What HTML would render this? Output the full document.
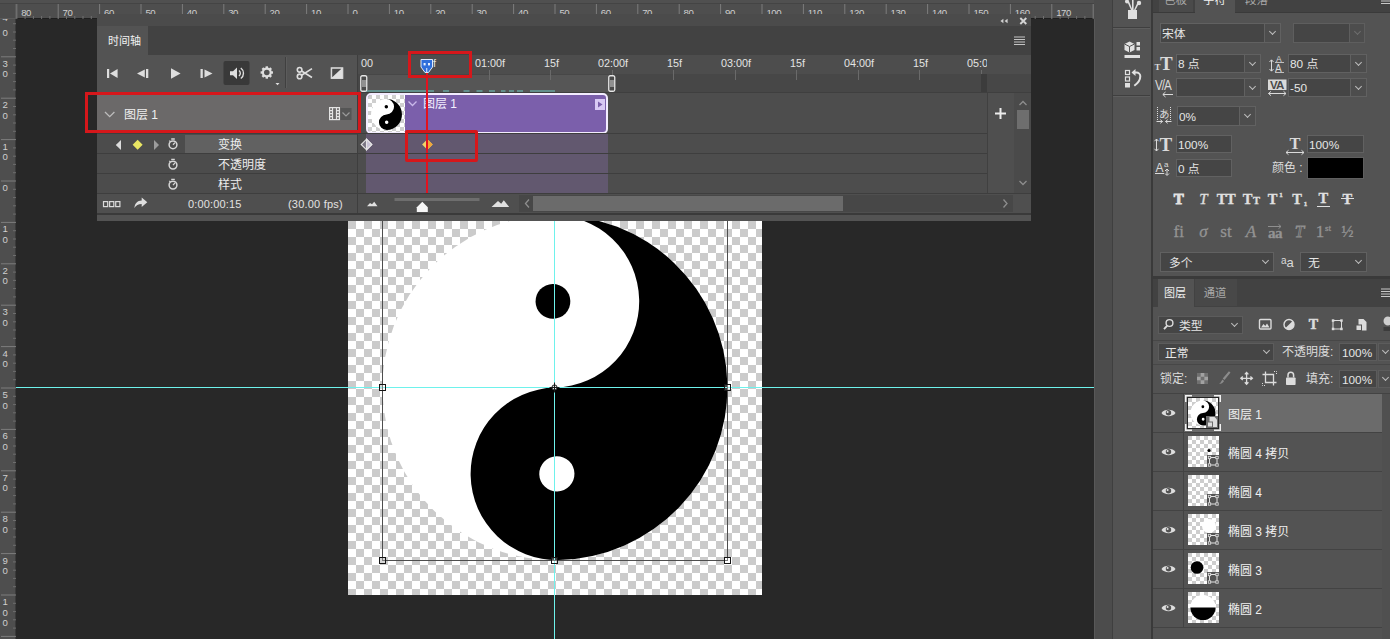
<!DOCTYPE html>
<html lang="zh-CN">
<head>
<meta charset="utf-8">
<title>Photoshop 时间轴</title>
<style>
*{box-sizing:border-box;margin:0;padding:0}
html,body{width:1390px;height:639px;overflow:hidden;background:#282828}
body{position:relative;font-family:"Liberation Sans","Noto Sans CJK SC",sans-serif;font-size:12px;color:#dcdcdc;line-height:1}
.abs{position:absolute}
svg{position:absolute;overflow:visible}
#paste{left:0;top:0;width:1094px;height:639px;background:#282828}
#canvas{left:348px;top:181px;width:414px;height:414px;background:repeating-conic-gradient(#cbcbcb 0% 25%,#fff 0% 50%) 0 0/16px 16px;}
#rulerH{left:0;top:0;width:1095px;height:19px;background:#4e4e4e;border-bottom:1px solid #1e1e1e}
#rulerV{left:0;top:19px;width:16px;height:620px;background:#4e4e4e;border-right:1px solid #3a3a3a}
.rl{position:absolute;font-size:10px;color:#c8c8c8;letter-spacing:0}
.guideH{left:16px;top:387px;width:1078px;height:1px;background:#6ef2ec}
.guideV{left:554px;top:221px;width:1px;height:418px;background:#6ef2ec}
/* timeline */
#tl{left:97px;top:14px;width:934px;height:207px;background:#535353}
/* right */
#gutter{left:1094px;top:0;width:19px;height:639px;background:#4c4c4c}
#strip{left:1112px;top:0;width:39px;height:639px;background:#535353;border-left:1px solid #3f3f3f}
#rsep{left:1151px;top:0;width:2px;height:639px;background:#3a3a3a}
#right{left:1153px;top:0;width:237px;height:639px;background:#535353}
.fld{position:absolute;background:#454545;border:1px solid #616161;height:19px;color:#e6e6e6;font-size:11.8px;line-height:17px;padding-left:1px;padding-top:0.600px;white-space:nowrap}
.fld .ar{position:absolute;right:0;top:0;bottom:0;width:16px;border-left:1px solid #686868;background:#4d4d4d}
.chev{position:absolute;left:50%;top:50%;width:5px;height:5px;margin:-4px 0 0 -2.500px;border-right:1.300px solid #bdbdbd;border-bottom:1.300px solid #bdbdbd;transform:rotate(45deg)}
.tabbar{position:absolute;background:#424242}
.tab{position:absolute;color:#a9a9a9;font-size:11.5px;text-align:center}
.tab.on{background:#535353;color:#f0f0f0}
</style>
</head>
<body>
<div id="paste" class="abs"></div>
<div id="canvas" class="abs"></div>
<svg id="yy" style="left:0;top:0" width="1094" height="639" viewBox="0 0 1094 639">
<g transform="translate(554.9 387.6) rotate(-1.3)">
<circle r="172.5" fill="#fff"/>
<path d="M0-172.5A172.5 172.5 0 0 1 0 172.5A86.25 86.25 0 0 1 0 0A86.25 86.25 0 0 0 0-172.5Z" fill="#000"/>
<circle cy="-86.25" r="17.4" fill="#000"/>
<circle cy="86.25" r="17.6" fill="#fff"/>
</g>
</svg>
<div class="abs guideH"></div>
<div class="abs guideV"></div>
<svg id="tbox" style="left:0;top:0" width="1094" height="639" viewBox="0 0 1094 639" shape-rendering="crispEdges">
<g fill="none" stroke="#4e4e4e" stroke-width="1">
<path d="M382.5 215V560.5H727.5V215"/>
</g>
<g fill="rgba(255,255,255,0.25)" stroke="#141414" stroke-width="1" style="outline:none">
<rect x="379.5" y="384.5" width="6" height="6"/>
<rect x="724.5" y="384.5" width="6" height="6"/>
<rect x="379.5" y="557.5" width="6" height="6"/>
<rect x="724.5" y="557.5" width="6" height="6"/>
<rect x="551.5" y="557.5" width="6" height="6"/>
</g>
<g shape-rendering="auto"><circle cx="554.5" cy="387.5" r="2.6" fill="#e8e8e8" stroke="#1a1a1a" stroke-width="1"/>
<path d="M554.5 382.5v10M549.5 387.5h10" stroke="#1a1a1a" stroke-width="1"/></g>
</svg>
<div id="rulerH" class="abs"></div>
<div id="rulerV" class="abs"></div>
<svg id="rH" style="left:0;top:0" width="1094" height="20" viewBox="0 0 1094 20">
<path d="M16.8 4V19M58.2 4V19M99.6 4V19M141.0 4V19M182.4 4V19M223.8 4V19M265.2 4V19M306.6 4V19M348.0 4V19M389.4 4V19M430.8 4V19M472.2 4V19M513.6 4V19M555.0 4V19M596.4 4V19M637.8 4V19M679.2 4V19M720.6 4V19M762.0 4V19M803.4 4V19M844.8 4V19M886.2 4V19M927.6 4V19M969.0 4V19M1010.4 4V19M1051.8 4V19M1093.2 4V19" stroke="#7d7d7d" stroke-width="1" fill="none"/>
<path d="M25.1 16V19M33.4 16V19M41.6 16V19M49.9 16V19M66.5 16V19M74.8 16V19M83.0 16V19M91.3 16V19M107.9 16V19M116.2 16V19M124.4 16V19M132.7 16V19M149.3 16V19M157.6 16V19M165.8 16V19M174.1 16V19M190.7 16V19M199.0 16V19M207.2 16V19M215.5 16V19M232.1 16V19M240.4 16V19M248.6 16V19M256.9 16V19M273.5 16V19M281.8 16V19M290.0 16V19M298.3 16V19M314.9 16V19M323.2 16V19M331.4 16V19M339.7 16V19M356.3 16V19M364.6 16V19M372.8 16V19M381.1 16V19M397.7 16V19M406.0 16V19M414.2 16V19M422.5 16V19M439.1 16V19M447.4 16V19M455.6 16V19M463.9 16V19M480.5 16V19M488.8 16V19M497.0 16V19M505.3 16V19M521.9 16V19M530.2 16V19M538.4 16V19M546.7 16V19M563.3 16V19M571.6 16V19M579.8 16V19M588.1 16V19M604.7 16V19M613.0 16V19M621.2 16V19M629.5 16V19M646.1 16V19M654.4 16V19M662.6 16V19M670.9 16V19M687.5 16V19M695.8 16V19M704.0 16V19M712.3 16V19M728.9 16V19M737.2 16V19M745.4 16V19M753.7 16V19M770.3 16V19M778.6 16V19M786.8 16V19M795.1 16V19M811.7 16V19M820.0 16V19M828.2 16V19M836.5 16V19M853.1 16V19M861.4 16V19M869.6 16V19M877.9 16V19M894.5 16V19M902.8 16V19M911.0 16V19M919.3 16V19M935.9 16V19M944.2 16V19M952.4 16V19M960.7 16V19M977.3 16V19M985.6 16V19M993.8 16V19M1002.1 16V19M1018.7 16V19M1027.0 16V19M1035.2 16V19M1043.5 16V19M1060.1 16V19M1068.4 16V19M1076.6 16V19M1084.9 16V19" stroke="#6e6e6e" stroke-width="1" fill="none"/>
<g font-family="Liberation Sans, sans-serif" font-size="9.6" fill="#cfcfcf" letter-spacing="-0.4">
<text x="21.2" y="15.8">80</text>
<text x="62.6" y="15.8">70</text>
<text x="104.0" y="15.8">60</text>
<text x="145.4" y="15.8">50</text>
<text x="186.8" y="15.8">40</text>
<text x="228.2" y="15.8">30</text>
<text x="269.6" y="15.8">20</text>
<text x="311.0" y="15.8">10</text>
<text x="352.4" y="15.8">0</text>
<text x="393.8" y="15.8">10</text>
<text x="435.2" y="15.8">20</text>
<text x="476.6" y="15.8">30</text>
<text x="518.0" y="15.8">40</text>
<text x="559.4" y="15.8">50</text>
<text x="600.8" y="15.8">60</text>
<text x="642.2" y="15.8">70</text>
<text x="683.6" y="15.8">80</text>
<text x="725.0" y="15.8">90</text>
<text x="766.4" y="15.8">100</text>
<text x="807.8" y="15.8">110</text>
<text x="849.2" y="15.8">120</text>
<text x="890.6" y="15.8">130</text>
<text x="932.0" y="15.8">140</text>
<text x="973.4" y="15.8">150</text>
<text x="1014.8" y="15.8">160</text>
<text x="1056.2" y="15.8">170</text>
<text x="1097.6" y="15.8">180</text>
</g></svg>
<svg id="rV" style="left:0;top:19px" width="16" height="620" viewBox="0 19 16 620">
<path d="M1 56.8H16M1 98.2H16M1 139.6H16M1 181.0H16M1 222.4H16M1 263.8H16M1 305.2H16M1 346.6H16M1 388.0H16M1 429.4H16M1 470.8H16M1 512.2H16M1 553.6H16M1 595.0H16M1 636.4H16" stroke="#7d7d7d" stroke-width="1" fill="none"/>
<path d="M13 23.7H16M13 32.0H16M13 40.2H16M13 48.5H16M13 65.1H16M13 73.4H16M13 81.6H16M13 89.9H16M13 106.5H16M13 114.8H16M13 123.0H16M13 131.3H16M13 147.9H16M13 156.2H16M13 164.4H16M13 172.7H16M13 189.3H16M13 197.6H16M13 205.8H16M13 214.1H16M13 230.7H16M13 239.0H16M13 247.2H16M13 255.5H16M13 272.1H16M13 280.4H16M13 288.6H16M13 296.9H16M13 313.5H16M13 321.8H16M13 330.0H16M13 338.3H16M13 354.9H16M13 363.2H16M13 371.4H16M13 379.7H16M13 396.3H16M13 404.6H16M13 412.8H16M13 421.1H16M13 437.7H16M13 446.0H16M13 454.2H16M13 462.5H16M13 479.1H16M13 487.4H16M13 495.6H16M13 503.9H16M13 520.5H16M13 528.8H16M13 537.0H16M13 545.3H16M13 561.9H16M13 570.2H16M13 578.4H16M13 586.7H16M13 603.3H16M13 611.6H16M13 619.8H16M13 628.1H16" stroke="#6e6e6e" stroke-width="1" fill="none"/>
<g font-family="Liberation Sans, sans-serif" font-size="9.6" fill="#cfcfcf">
<text x="2.4" y="21.4">4</text>
<text x="2.4" y="35.9">0</text>
<text x="2.4" y="66.8">3</text>
<text x="2.4" y="77.3">0</text>
<text x="2.4" y="108.2">2</text>
<text x="2.4" y="118.7">0</text>
<text x="2.4" y="149.6">1</text>
<text x="2.4" y="160.1">0</text>
<text x="2.4" y="191.0">0</text>
<text x="2.4" y="232.4">1</text>
<text x="2.4" y="242.9">0</text>
<text x="2.4" y="273.8">2</text>
<text x="2.4" y="284.3">0</text>
<text x="2.4" y="315.2">3</text>
<text x="2.4" y="325.7">0</text>
<text x="2.4" y="356.6">4</text>
<text x="2.4" y="367.1">0</text>
<text x="2.4" y="398.0">5</text>
<text x="2.4" y="408.5">0</text>
<text x="2.4" y="439.4">6</text>
<text x="2.4" y="449.9">0</text>
<text x="2.4" y="480.8">7</text>
<text x="2.4" y="491.3">0</text>
<text x="2.4" y="522.2">8</text>
<text x="2.4" y="532.7">0</text>
<text x="2.4" y="563.6">9</text>
<text x="2.4" y="574.1">0</text>
<text x="2.4" y="605.0">1</text>
<text x="2.4" y="615.5">0</text>
<text x="2.4" y="626.0">0</text>
<text x="2.4" y="646.4">1</text>
<text x="2.4" y="656.9">1</text>
<text x="2.4" y="667.4">0</text>
</g></svg>
<div class="abs" style="left:0;top:0;width:16px;height:19px;background:#4c4c4c;border-right:1px solid #5a5a5a;border-bottom:1px solid #5a5a5a"></div>
<div class="abs" style="left:0;top:0;width:1095px;height:3px;background:#505050"></div><div class="abs" style="left:0;top:3px;width:1095px;height:1px;background:#444"></div>
<div id="tl" class="abs" style="left:0;top:0;width:0;height:0">
<div class="abs" style="left:97px;top:14px;width:934px;height:207px;background:#535353"></div>
<div class="abs" style="left:97px;top:14px;width:934px;height:12px;background:#4b4b4b"></div>
<div class="abs" style="left:97px;top:26px;width:934px;height:29px;background:#424242"></div>
<div class="abs" style="left:97px;top:26px;width:51px;height:29px;background:#535353;color:#f2f2f2;font-size:11px;line-height:30px;padding-left:11px;white-space:nowrap">时间轴</div>
<svg style="left:998px;top:16px" width="36" height="10" viewBox="0 0 36 10"><path d="M5.400 2.800L2.400 5l3 2.200zM9.600 2.800L6.600 5l3 2.200z" fill="#d0d0d0"/><path d="M22.300 2l6 6M28.300 2l-6 6" stroke="#d4d4d4" stroke-width="1.900"/></svg>
<svg style="left:1014px;top:36px" width="12" height="10" viewBox="0 0 12 10"><path d="M0 1h11M0 3.500h11M0 6h11M0 8.500h11" stroke="#c4c4c4" stroke-width="1"/></svg>
<!-- time ruler rows -->
<div class="abs" style="left:358px;top:55px;width:673px;height:19px;background:#4d4d4d"></div>
<div class="abs" style="left:358px;top:74px;width:673px;height:19px;background:#474747"></div>
<div class="abs" style="left:364px;top:75px;width:247px;height:17px;background:#565656"></div>
<!-- track areas -->
<div class="abs" style="left:358px;top:93px;width:629px;height:101px;background:#4d4d4d"></div>
<div class="abs" style="left:358px;top:92px;width:673px;height:1px;background:#3f3f3f"></div>
<div class="abs" style="left:987px;top:93px;width:44px;height:101px;background:#4f4f4f;border-left:1px solid #404040"></div>
<div class="abs" style="left:358px;top:55px;width:629px;height:38px;overflow:hidden">
<div class="abs" style="left:-21.0px;top:2px;width:60px;text-align:center;font-size:10.8px;line-height:12px;color:#e4e4e4;white-space:nowrap">00</div>
<div class="abs" style="left:40.5px;top:2px;width:60px;text-align:center;font-size:10.8px;line-height:12px;color:#e4e4e4;white-space:nowrap">15f</div>
<div class="abs" style="left:69.0px;top:15px;width:1px;height:10px;background:#6a6a6a"></div>
<div class="abs" style="left:102.0px;top:2px;width:60px;text-align:center;font-size:10.8px;line-height:12px;color:#e4e4e4;white-space:nowrap">01:00f</div>
<div class="abs" style="left:130.5px;top:15px;width:1px;height:10px;background:#6a6a6a"></div>
<div class="abs" style="left:163.5px;top:2px;width:60px;text-align:center;font-size:10.8px;line-height:12px;color:#e4e4e4;white-space:nowrap">15f</div>
<div class="abs" style="left:192.0px;top:15px;width:1px;height:10px;background:#6a6a6a"></div>
<div class="abs" style="left:225.0px;top:2px;width:60px;text-align:center;font-size:10.8px;line-height:12px;color:#e4e4e4;white-space:nowrap">02:00f</div>
<div class="abs" style="left:253.5px;top:15px;width:1px;height:10px;background:#6a6a6a"></div>
<div class="abs" style="left:286.5px;top:2px;width:60px;text-align:center;font-size:10.8px;line-height:12px;color:#e4e4e4;white-space:nowrap">15f</div>
<div class="abs" style="left:315.0px;top:15px;width:1px;height:10px;background:#6a6a6a"></div>
<div class="abs" style="left:348.0px;top:2px;width:60px;text-align:center;font-size:10.8px;line-height:12px;color:#e4e4e4;white-space:nowrap">03:00f</div>
<div class="abs" style="left:376.5px;top:15px;width:1px;height:10px;background:#6a6a6a"></div>
<div class="abs" style="left:409.5px;top:2px;width:60px;text-align:center;font-size:10.8px;line-height:12px;color:#e4e4e4;white-space:nowrap">15f</div>
<div class="abs" style="left:438.0px;top:15px;width:1px;height:10px;background:#6a6a6a"></div>
<div class="abs" style="left:471.0px;top:2px;width:60px;text-align:center;font-size:10.8px;line-height:12px;color:#e4e4e4;white-space:nowrap">04:00f</div>
<div class="abs" style="left:499.5px;top:15px;width:1px;height:10px;background:#6a6a6a"></div>
<div class="abs" style="left:532.5px;top:2px;width:60px;text-align:center;font-size:10.8px;line-height:12px;color:#e4e4e4;white-space:nowrap">15f</div>
<div class="abs" style="left:561.0px;top:15px;width:1px;height:10px;background:#6a6a6a"></div>
<div class="abs" style="left:594.0px;top:2px;width:60px;text-align:center;font-size:10.8px;line-height:12px;color:#e4e4e4;white-space:nowrap">05:00f</div>
<div class="abs" style="left:622.5px;top:15px;width:1px;height:10px;background:#6a6a6a"></div>
</div>
<div class="abs" style="left:981px;top:74px;width:6px;height:18px;background:#3c3c3c"></div>
<svg style="left:366px;top:88.500px" width="200" height="4" viewBox="0 0 200 4"><path d="M0 2h68M77 2h6M97.500 2h6M110.500 2h6M123 2h6M135 2h4.500M143 2h5M151 2h6M164 2h25" stroke="#68a39f" stroke-width="1.600" fill="none"/></svg>
<svg style="left:360px;top:75px" width="8" height="17" viewBox="0 0 8 17"><rect x="0.750" y="0.750" width="6" height="15.500" rx="1.500" fill="#4a4a4a" stroke="#e6e6e6" stroke-width="1.300"/><path d="M3 5v7M5 5v7" stroke="#e6e6e6" stroke-width="0.900"/></svg>
<svg style="left:608px;top:75px" width="8" height="17" viewBox="0 0 8 17"><rect x="0.750" y="0.750" width="6" height="15.500" rx="1.500" fill="#4a4a4a" stroke="#e6e6e6" stroke-width="1.300"/><path d="M3 5v7M5 5v7" stroke="#e6e6e6" stroke-width="0.900"/></svg>
<div class="abs" style="left:366px;top:134px;width:242px;height:59px;background:#62586f"></div>
<div class="abs" style="left:366px;top:153px;width:242px;height:1px;background:#4a4258"></div>
<div class="abs" style="left:366px;top:173px;width:242px;height:1px;background:#4a4258"></div>
<div class="abs" style="left:366px;top:93px;width:242px;height:41px;background:#7b5fab;border:2px solid #f3ecff;border-radius:5px;overflow:hidden">
<div class="abs" style="left:0;top:0;width:37px;height:37px;background:repeating-conic-gradient(#fff 0% 25%,#cfcfcf 0% 50%) 0 0/8px 8px"></div>
<svg style="left:2px;top:3px" width="33" height="33" viewBox="-16 -16 32 32"><g transform="rotate(-1.300)"><circle r="15" fill="#fff"/><path d="M0-15A15 15 0 0 1 0 15A7.500 7.500 0 0 1 0 0A7.500 7.500 0 0 0 0-15Z" fill="#000"/><circle cy="-7.500" r="1.700" fill="#000"/><circle cy="7.500" r="1.700" fill="#fff"/></g></svg>
<svg style="left:38.500px;top:5px" width="12" height="8" viewBox="0 0 12 8"><path d="M1.500 1.500l4 4 4-4" fill="none" stroke="#c9b8ea" stroke-width="1.300"/></svg>
<div class="abs" style="left:55px;top:2px;font-size:12px;line-height:14px;color:#f4f0ff;white-space:nowrap">图层 1</div>
<svg style="left:227px;top:4px" width="10" height="11" viewBox="0 0 10 11"><rect width="10" height="11" fill="#d9c9f4"/><path d="M3 2.500v6l4.500-3z" fill="#7b5fab"/></svg>
</div>
<svg style="left:358px;top:134px" width="130" height="22" viewBox="358 134 130 22">
<path d="M366.500 139.200l5.300 5.300-5.300 5.300-5.300-5.300z" fill="#7a7683" stroke="#e6e6e6" stroke-width="1.100"/>
<path d="M366.500 139.200l5.300 5.300-5.300 5.300z" fill="#c9c4d6" stroke="#e6e6e6" stroke-width="1.100"/>
<path d="M427.400 139.200l5.300 5.300-5.300 5.300-5.300-5.300z" fill="#f3d468"/>
<path d="M427.400 139.200l5.300 5.300-5.300 5.300z" fill="#f0a63a"/>
</svg>
<div class="abs" style="left:426px;top:73px;width:2px;height:120px;background:#e3121f"></div>
<svg style="left:419px;top:58px" width="16" height="17" viewBox="0 0 16 17"><path d="M2 1.500h11.500v7.500l-4 5.500h-3.500l-4-5.500z" fill="#2f6fdb" stroke="#dfe9fb" stroke-width="1"/><rect x="4.600" y="5" width="2" height="2.400" fill="#e8f0ff"/><rect x="9" y="5" width="2" height="2.400" fill="#e8f0ff"/><path d="M7.750 10v4" stroke="#e8f0ff" stroke-width="1"/></svg>
<svg style="left:994px;top:107px" width="13" height="13" viewBox="0 0 13 13"><path d="M6.500 1v11M1 6.500h11" stroke="#ececec" stroke-width="2"/></svg>
<div class="abs" style="left:1014px;top:93px;width:17px;height:101px;background:#4a4a4a"></div>
<div class="abs" style="left:1017px;top:110px;width:12px;height:19px;background:#6e6e6e"></div>
<svg style="left:1018px;top:98px" width="10" height="92" viewBox="0 0 10 92"><path d="M1.500 7L5 3.500 8.500 7M1.500 83L5 86.500 8.500 83" fill="none" stroke="#8e8e8e" stroke-width="1.300"/></svg>
<!-- bottom bar -->
<div class="abs" style="left:97px;top:194px;width:934px;height:19px;background:#4f4f4f"></div>
<div class="abs" style="left:97px;top:213px;width:934px;height:2px;background:#3a3a3a"></div>
<!-- left column -->
<div class="abs" style="left:97px;top:93px;width:261px;height:41px;background:#6b6969"></div>
<div class="abs" style="left:97px;top:134px;width:261px;height:60px;background:#4c4c4c"></div>
<div class="abs" style="left:185px;top:135px;width:173px;height:18px;background:#616161"></div>
<div class="abs" style="left:97px;top:153px;width:890px;height:1px;background:#3e3e3e"></div>
<div class="abs" style="left:97px;top:173px;width:890px;height:1px;background:#3e3e3e"></div>
<div class="abs" style="left:97px;top:193px;width:934px;height:1px;background:#3e3e3e"></div>
<div class="abs" style="left:97px;top:133px;width:890px;height:1px;background:#3e3e3e"></div>
<div class="abs" style="left:357px;top:55px;width:1px;height:158px;background:#3e3e3e"></div>
<svg style="left:97px;top:55px" width="261" height="38" viewBox="97 55 261 38">
<g fill="#dedede">
<path d="M107 69h2.200v9H107zM117.600 69v9l-7.600-4.500z"/>
<path d="M144.800 69.500L137 73.500l7.800 4zM146 69h2.300v9H146z"/>
<path d="M171 68.300v10.400l9.600-5.200z"/>
<path d="M200.500 69h2.300v9h-2.300zM204.500 69.500v8l8-4z"/>
</g>
<rect x="223.500" y="61" width="26" height="24" rx="2" fill="#393939"/>
<path d="M230 71.200h3l4-3.700v11.500l-4-3.700h-3z" fill="#dedede"/>
<path d="M239 70.500a3.500 3.500 0 0 1 0 5.500M240.800 68a6.500 6.500 0 0 1 0 10.500" fill="none" stroke="#dedede" stroke-width="1.400"/>
<g transform="translate(266.800 72.500)" fill="#dedede">
<circle r="3.900" fill="none" stroke="#dedede" stroke-width="2.200"/>
<g id="gt"><rect x="-1.200" y="-6.200" width="2.400" height="2.600"/><rect x="-1.200" y="3.600" width="2.400" height="2.600"/><rect x="-6.200" y="-1.200" width="2.600" height="2.400"/><rect x="3.600" y="-1.200" width="2.600" height="2.400"/></g>
<g transform="rotate(45)"><rect x="-1.200" y="-6.200" width="2.400" height="2.600"/><rect x="-1.200" y="3.600" width="2.400" height="2.600"/><rect x="-6.200" y="-1.200" width="2.600" height="2.400"/><rect x="3.600" y="-1.200" width="2.600" height="2.400"/></g>
</g>
<path d="M275.500 83h4l-2 2.200z" fill="#dedede"/>
<path d="M285.500 57v31" stroke="#404040" stroke-width="1"/><path d="M286.500 57v31" stroke="#5c5c5c" stroke-width="1"/>
<g fill="none" stroke="#dedede" stroke-width="1.600">
<circle cx="299.600" cy="69.800" r="2.300"/><circle cx="299.600" cy="76.400" r="2.300"/>
<path d="M301.600 71L312 77.500M301.600 75.200L312 68.600"/>
</g>
<rect x="331.200" y="67.800" width="11.600" height="10.600" fill="#e0e0e0" stroke="#e0e0e0" stroke-width="1"/>
<path d="M332.200 68.800h9.200l-9.200 8.400z" fill="#4a4a4a"/>
</svg>
<svg style="left:97px;top:93px" width="261" height="120" viewBox="97 93 261 120">
<path d="M105 112l4.700 4.600 4.700-4.600" fill="none" stroke="#bdbdbd" stroke-width="1.300"/>
<g fill="none" stroke="#e4e4e4" stroke-width="1.200"><rect x="329.600" y="107.600" width="9.800" height="12"/><path d="M332.500 107.600v12M336.500 107.600v12M329.600 110.600h3M329.600 113.600h3M329.600 116.600h3M336.500 110.600h3M336.500 113.600h3M336.500 116.600h3"/></g>
<rect x="340.500" y="108" width="11" height="12" fill="#555"/>
<path d="M342.500 112.500l3.500 3.500 3.500-3.500" fill="none" stroke="#9a9a9a" stroke-width="1.200"/>
<path d="M121 140v10l-5.200-5z" fill="#dcdcdc"/>
<path d="M137.600 139.700l5 5-5 5-5-5z" fill="#e9e663"/>
<path d="M154 140v10l5-5z" fill="#9c9c9c"/>
<g transform="translate(168 138)"><g fill="none" stroke="#d6d6d6" stroke-width="1.5"><circle cx="5" cy="6.800" r="3.900"/><path d="M5 6.800L7 4.600M3.200 1h3.600M1.300 2.600l1.200 1.200" stroke-width="1.300"/></g></g>
<g transform="translate(168 158.300)"><g fill="none" stroke="#d6d6d6" stroke-width="1.5"><circle cx="5" cy="6.800" r="3.900"/><path d="M5 6.800L7 4.600M3.200 1h3.600M1.300 2.600l1.200 1.200" stroke-width="1.300"/></g></g>
<g transform="translate(168 178.300)"><g fill="none" stroke="#d6d6d6" stroke-width="1.5"><circle cx="5" cy="6.800" r="3.900"/><path d="M5 6.800L7 4.600M3.200 1h3.600M1.300 2.600l1.200 1.200" stroke-width="1.300"/></g></g>
<g fill="none" stroke="#dadada" stroke-width="1.200"><rect x="103.500" y="201.600" width="4.200" height="5"/><rect x="109.600" y="201.600" width="4.200" height="5"/><rect x="115.700" y="201.600" width="4.200" height="5"/></g>
<path d="M147.300 202.300l-5.600-4.800v2.900c-4.500.2-7 3-7.300 7.600 1.700-2.800 3.800-4 7.300-4v3.100z" fill="#dedede"/>
</svg>
<div class="abs" style="left:124px;top:108px;font-size:12px;line-height:14px;color:#f0f0f0;white-space:nowrap">图层 1</div>
<div class="abs" style="left:218px;top:138px;font-size:12px;line-height:14px;color:#ececec;white-space:nowrap">变换</div>
<div class="abs" style="left:218px;top:158px;font-size:12px;line-height:14px;color:#ececec;white-space:nowrap">不透明度</div>
<div class="abs" style="left:218px;top:178px;font-size:12px;line-height:14px;color:#ececec;white-space:nowrap">样式</div>
<div class="abs" style="left:188px;top:198px;font-size:11px;line-height:12px;color:#e2e2e2;white-space:nowrap;letter-spacing:0.150px">0:00:00:15</div>
<div class="abs" style="left:288px;top:198px;font-size:11px;line-height:12px;color:#e2e2e2;white-space:nowrap;letter-spacing:0.200px">(30.00 fps)</div>

<svg style="left:358px;top:194px" width="673" height="19" viewBox="358 194 673 19">
<path d="M367 206.300l3-3.200 2 1.200 2.200-2.500 3.300 4.500z" fill="#e0e0e0"/>
<rect x="394.500" y="198" width="85" height="3" fill="#6e6e6e"/>
<path d="M416.800 212v-4.800l5.500-5.400 5.500 5.400v4.800z" fill="#f6f6f6"/>
<path d="M491.500 207l6.500-6 3.200 2.800 2.600-3.600 5.400 6.800z" fill="#e0e0e0"/>
<rect x="519" y="195" width="494" height="17" fill="#474747"/>
<rect x="533" y="196" width="310" height="15" fill="#6b6b6b"/>
<path d="M529 199.500l-3.500 4 3.500 4M1003.500 199.500l3.500 4-3.500 4" fill="none" stroke="#8e8e8e" stroke-width="1.300"/>
</svg>
</div>
<!-- annotations -->
<div class="abs" style="left:85px;top:92px;width:276px;height:41px;border:3px solid #d6171b"></div>
<div class="abs" style="left:408px;top:51px;width:64px;height:27px;border:3px solid #d6171b"></div>
<div class="abs" style="left:405px;top:130px;width:73px;height:32px;border:3px solid #d6171b;border-radius:2px"></div>
<div id="gutter" class="abs"></div><div class="abs" style="left:1094px;top:19px;width:1px;height:620px;background:#585858"></div>
<div id="strip" class="abs">
<div class="abs" style="left:0;top:27px;width:37px;height:1px;background:#3f3f3f"></div>
<div class="abs" style="left:0;top:28px;width:37px;height:1px;background:#5e5e5e"></div>
<div class="abs" style="left:0;top:95px;width:37px;height:1px;background:#3f3f3f"></div>
<div class="abs" style="left:0;top:96px;width:37px;height:1px;background:#5e5e5e"></div>
<svg style="left:-1px;top:0" width="37" height="100" viewBox="1113 0 37 100">
<g fill="#e0e0e0"><rect x="1129" y="10" width="9" height="9"/><path d="M1132 10l-3.500-8 1.500-.8 3.500 8.800zM1133 10V0h1.600v10zM1135 10l3.500-7.500 1.500.8-3.500 6.700z"/><circle cx="1128" cy="1.500" r="2"/><circle cx="1140" cy="3" r="2.200"/></g>
<g fill="#e0e0e0"><path d="M1125.500 44l5-2.500 5 2.500v6l-5 2.500-5-2.500z"/><rect x="1137.500" y="42" width="3.500" height="3.500"/><rect x="1137.500" y="47" width="3.500" height="3.500"/><rect x="1125.500" y="55" width="15.500" height="3"/></g>
<path d="M1125.500 44l5 2.500 5-2.500M1130.500 46.500v6" fill="none" stroke="#535353" stroke-width="1"/>
<g fill="none" stroke="#e0e0e0" stroke-width="1.200"><rect x="1126.500" y="70.500" width="4" height="4"/><rect x="1126.500" y="77" width="4" height="4"/></g><rect x="1126" y="83" width="5" height="4.500" fill="#e0e0e0"/>
<path d="M1134 72.500h3.500a3.800 3.800 0 0 1 3.800 3.800c0 4-2.500 7-6 9.500" fill="none" stroke="#e0e0e0" stroke-width="2"/><path d="M1136.500 69l-4 3.500 4 3.500z" fill="#e0e0e0"/>
</svg>
</div>
<div id="rsep" class="abs"></div>
<div id="right" class="abs">
<div class="tabbar" style="left:0;top:0;width:237px;height:12px"></div>
<div class="abs" style="left:0;top:12px;width:237px;height:1px;background:#3a3a3a"></div>
<div class="tab" style="left:6px;top:0;width:34px;height:12px;background:#4a4a4a;overflow:hidden"><span style="position:absolute;left:5px;top:-7px;line-height:14px;white-space:nowrap">色板</span></div>
<div class="tab on" style="left:42px;top:0;width:40px;height:13px;overflow:hidden"><span style="position:absolute;left:8px;top:-7px;line-height:14px;white-space:nowrap">字符</span></div>
<div class="tab" style="left:84px;top:0;width:40px;height:12px;overflow:hidden"><span style="position:absolute;left:8px;top:-7px;line-height:14px;white-space:nowrap">段落</span></div>
<svg style="left:228px;top:0" width="9" height="5" viewBox="0 0 9 5"><path d="M0 1h9M0 3.500h9" stroke="#c8c8c8" stroke-width="1"/></svg>
<div class="fld" style="left:7px;top:23px;width:121px;height:20px;line-height:18px;border-color:#616161;">宋体<span class="ar" style="width:16px;border-left-color:#616161"><i class="chev"></i></span></div>
<div class="fld" style="left:140px;top:23px;width:72px;height:20px;line-height:18px;border-color:#5e5e5e;"><span class="ar" style="width:15px;border-left-color:#5e5e5e"><i class="chev" style="border-color:#6e6e6e"></i></span></div>
<div class="fld" style="left:23px;top:54px;width:85px;height:19px;line-height:17px;border-color:#616161;">8 点<span class="ar" style="width:16px;border-left-color:#616161"><i class="chev"></i></span></div>
<div class="fld" style="left:135px;top:54px;width:79px;height:19px;line-height:17px;border-color:#616161;">80 点<span class="ar" style="width:16px;border-left-color:#616161"><i class="chev"></i></span></div>
<div class="fld" style="left:23px;top:78px;width:85px;height:19px;line-height:17px;border-color:#616161;"><span class="ar" style="width:16px;border-left-color:#616161"><i class="chev"></i></span></div>
<div class="fld" style="left:135px;top:78px;width:79px;height:19px;line-height:17px;border-color:#616161;">-50<span class="ar" style="width:16px;border-left-color:#616161"><i class="chev"></i></span></div>
<div class="fld" style="left:24px;top:106px;width:79px;height:20px;line-height:18px;border-color:#616161;">0%<span class="ar" style="width:16px;border-left-color:#616161"><i class="chev"></i></span></div>
<div class="fld" style="left:23px;top:135px;width:56px;height:18px;line-height:16px;border-color:#616161;">100%</div>
<div class="fld" style="left:154px;top:135px;width:57px;height:18px;line-height:16px;border-color:#616161;">100%</div>
<div class="fld" style="left:23px;top:159px;width:56px;height:18px;line-height:16px;border-color:#616161;">0 点</div>
<div class="abs" style="left:119px;top:161px;font-size:12px;line-height:14px;color:#dcdcdc;white-space:nowrap">颜色 :</div>
<div class="abs" style="left:154px;top:157px;width:57px;height:22px;background:#000;border:1px solid #5f5f5f"></div>
<div class="fld" style="left:7px;top:252px;width:114px;height:20px;line-height:18px;border-color:#616161;padding-left:8px;">多个<span class="ar" style="width:16px;border-left-color:transparent;background:transparent"><i class="chev"></i></span></div>
<div class="fld" style="left:147px;top:252px;width:67px;height:20px;line-height:18px;border-color:#616161;padding-left:7px;">无<span class="ar" style="width:16px;border-left-color:transparent;background:transparent"><i class="chev"></i></span></div>
<svg style="left:0;top:0" width="237" height="280" viewBox="1153 0 237 280">
<g font-family="Liberation Serif, serif" fill="#dadada" font-weight="bold">
<text x="1154.500" y="69.500" font-size="9">T</text><text x="1160" y="70" font-size="19">T</text>
<text x="1276" y="62" font-size="8.500" font-family="Liberation Sans, sans-serif" font-weight="normal">A</text><text x="1275" y="72" font-size="10" font-family="Liberation Sans, sans-serif" font-weight="normal">A</text>
<text x="1155" y="90.500" font-size="15" font-family="Liberation Sans, sans-serif" font-weight="normal" letter-spacing="-1.300" transform="translate(1155 0) scale(0.780 1) translate(-1155 0)">V/A</text>

<text x="1159" y="117.500" font-size="10.500" font-family="Noto Sans CJK JP, sans-serif" font-weight="normal">あ</text>
<text x="1159.500" y="150.500" font-size="19">T</text>
<text x="1289.500" y="148.800" font-size="16.500">T</text>
<text x="1155.500" y="172" font-size="12" font-family="Liberation Sans, sans-serif" font-weight="normal">A</text><text x="1164" y="167" font-size="8" font-family="Liberation Sans, sans-serif" font-weight="normal">a</text>
<text x="1281" y="263.500" font-size="10" font-family="Liberation Sans, sans-serif" font-weight="normal">a</text><text x="1286.500" y="266.500" font-size="13" font-family="Liberation Sans, sans-serif" font-weight="normal">a</text>
</g>
<g fill="none" stroke="#dadada" stroke-width="1">
<path d="M1271.500 60v11M1269.500 62l2-2.200 2 2.200M1269.500 69l2 2.200 2-2.200"/>
<path d="M1275 62.500h9M1275 72.500h9" stroke-width="0.800"/>
<path d="M1163 94.500h10M1165.500 92l-2.700 2.500 2.700 2.500"/>
<path d="M1268.500 93.500h17.500M1271 91.300l-2.500 2.200 2.500 2.200M1283.500 91.300l2.500 2.200-2.500 2.200"/>
<path d="M1157.500 107v13M1170.500 107v13" stroke-dasharray="1 1"/>
<path d="M1156.500 121.500h6M1171.500 121.500h-6M1160.300 119.700l2.200 1.800-2.200 1.800M1167.700 119.700l-2.200 1.800 2.200 1.800"/>
<path d="M1156.500 139v12M1154.500 141.200l2-2.200 2 2.200M1154.500 148.800l2 2.200 2-2.200"/>
<path d="M1286 152.500h18M1288.500 150.300l-2.500 2.200 2.500 2.200M1301.500 150.300l2.500 2.200-2.500 2.200"/>
<path d="M1167 169v6M1165 171l2-2 2 2M1165 173.500l2 2 2-2M1155 173.500h9"/>
</g>
<rect x="1268" y="79.500" width="18.500" height="10.500" fill="#dadada"/>
<text x="1270" y="89" font-size="11.500" font-family="Liberation Sans, sans-serif" font-weight="bold" fill="#4a4a4a" letter-spacing="-0.900">VA</text>
<g font-family="Liberation Serif, serif" fill="#e0e0e0" font-weight="bold" font-size="15" text-anchor="middle" stroke="#e0e0e0" stroke-width="0.300">
<text x="1178.800" y="203.500" stroke-width="0.900">T</text>
<text x="1203.400" y="203.500" font-style="italic" font-weight="normal">T</text>
<text x="1226" y="203.500" font-size="14.500" letter-spacing="-0.500">TT</text>
<text x="1247.500" y="203.500" font-size="14.500">T</text><text x="1256.500" y="203.500" font-size="10.500">T</text>
<text x="1272.500" y="203.500" font-size="14.500">T</text><text x="1281" y="197" font-size="7">1</text>
<text x="1297" y="203.500" font-size="14.500">T</text><text x="1305.500" y="205.500" font-size="7">1</text>
<text x="1323.300" y="202.500" font-size="14.500">T</text>
<text x="1347.400" y="203.500" font-size="14.500">T</text>
</g>
<path d="M1317 206.500h13M1341 198.500h13" stroke="#e0e0e0" stroke-width="1.200"/>
<g font-family="Liberation Serif, serif" fill="#939393" font-size="17" text-anchor="middle" stroke="#939393" stroke-width="0.300">
<text x="1178.800" y="237">fi</text>
<text x="1203.400" y="237" font-style="italic">σ</text>
<text x="1226" y="237">st</text>
<text x="1251" y="237" font-style="italic">A</text>
<text x="1275" y="238" font-size="15" font-weight="bold" letter-spacing="-0.500">aa</text>
<text x="1299.500" y="237" font-style="italic" fill="none" stroke="#8e8e8e" stroke-width="0.800">T</text>
<text x="1320" y="237">1</text><text x="1328" y="231" font-size="9">st</text>
<text x="1347.400" y="237" font-size="16">½</text>
</g>
<path d="M1268 226.500h13M1278.500 224.300l2.500 2.200-2.500 2.200" fill="none" stroke="#8e8e8e" stroke-width="1"/>
</svg>
<div class="abs" style="left:0;top:276px;width:237px;height:3px;background:#3a3a3a"></div>
<div class="tabbar" style="left:0;top:279px;width:237px;height:28px"></div>
<div class="tab on" style="left:5px;top:279px;width:36px;height:28px;line-height:28px;font-size:11px;text-indent:-2px">图层</div>
<div class="tab" style="left:42px;top:279px;width:42px;height:27px;line-height:28px;background:#484848;font-size:11.300px;text-indent:-2px">通道</div>
<svg style="left:228px;top:288px" width="9" height="10" viewBox="0 0 9 10"><path d="M0 1h9M0 3.500h9M0 6h9M0 8.500h9" stroke="#c8c8c8" stroke-width="1"/></svg>
<div class="fld" style="left:5px;top:316px;width:85px;height:18px;line-height:16px;border-color:#616161;padding-left:20px;border-color:#5c5c5c;">类型<span class="ar" style="width:16px;border-left-color:transparent;background:transparent"><i class="chev"></i></span></div>
<div class="abs" style="left:0;top:340px;width:237px;height:1px;background:#474747"></div>
<div class="fld" style="left:5px;top:343px;width:116px;height:18px;line-height:16px;border-color:#616161;padding-left:6px;border-color:#5c5c5c;">正常<span class="ar" style="width:15px;border-left-color:transparent;background:transparent"><i class="chev"></i></span></div>
<div class="abs" style="left:129px;top:345px;font-size:12px;line-height:14px;color:#dcdcdc;white-space:nowrap">不透明度:</div>
<div class="fld" style="left:186px;top:343px;width:38px;height:18px;line-height:16px;border-color:#616161;border-color:#5c5c5c;padding-left:2px;">100%</div>
<div class="fld" style="left:225px;top:343px;width:14px;height:18px;border-color:#5c5c5c;background:#4e4e4e"><i class="chev"></i></div>
<div class="abs" style="left:0;top:364px;width:237px;height:1px;background:#474747"></div>
<div class="abs" style="left:7px;top:372px;font-size:12px;line-height:14px;color:#dcdcdc;white-space:nowrap">锁定:</div>
<div class="abs" style="left:153px;top:372px;font-size:12px;line-height:14px;color:#dcdcdc;white-space:nowrap">填充:</div>
<div class="fld" style="left:186px;top:370px;width:38px;height:18px;line-height:16px;border-color:#616161;border-color:#5c5c5c;padding-left:2px;">100%</div>
<div class="fld" style="left:225px;top:370px;width:14px;height:18px;border-color:#5c5c5c;background:#4e4e4e"><i class="chev"></i></div>
<svg style="left:0;top:279px" width="237" height="115" viewBox="1153 279 237 115">
<g fill="none" stroke="#dcdcdc" stroke-width="1.400">
<circle cx="1169.500" cy="323" r="3.400"/><path d="M1167 325.800l-3 3.400" stroke-width="1.800"/>
<rect x="1259.500" y="319.500" width="11.500" height="9.500" rx="1"/>
<circle cx="1289" cy="324.500" r="5"/>
<rect x="1333" y="320.500" width="8.500" height="8.500" stroke-width="1"/>
</g>
<path d="M1261 327.500l2.500-3.500 1.800 2 1.700-2.500 2.500 4z" fill="#dcdcdc"/>
<path d="M1289 319.500a5 5 0 0 1 3.600 8.500l-7.100-7.100a5 5 0 0 1 3.500-1.400z" fill="#dcdcdc" transform="rotate(90 1289 324.500)"/>
<text x="1308.800" y="329.300" font-family="Liberation Serif, serif" font-weight="bold" font-size="14" fill="#dcdcdc" stroke="#dcdcdc" stroke-width="0.500">T</text>
<g fill="#dcdcdc"><rect x="1331.800" y="319.300" width="2.500" height="2.500"/><rect x="1340.200" y="319.300" width="2.500" height="2.500"/><rect x="1331.800" y="327.700" width="2.500" height="2.500"/><rect x="1340.200" y="327.700" width="2.500" height="2.500"/></g>
<path d="M1358.500 319h5l3 3v8.500h-8z" fill="#dcdcdc"/><rect x="1356" y="325" width="5.500" height="5.500" fill="#dcdcdc" stroke="#535353" stroke-width="1"/>
<circle cx="1388" cy="321" r="4.500" fill="#cfcfcf"/><rect x="1383.500" y="327" width="8" height="4" fill="#3c3c3c"/>
<g><rect x="1197" y="373" width="11" height="11" fill="#a2a2a2"/><path d="M1197 373h3.670v3.670h-3.670zM1204.330 373h3.670v3.670h-3.670zM1200.670 376.670h3.670v3.670h-3.670zM1197 380.330h3.670v3.670h-3.670zM1204.330 380.330h3.670v3.670h-3.670z" fill="#707070"/></g>
<path d="M1230.500 372.500l-6 7.500-1.800-1.500 6.200-7.200zM1222.300 379.500l1.800 1.600c-1.300 2.300-3 3-5.100 2.900 1.800-.9 2.100-2.600 3.300-4.500z" fill="#8c8c8c"/>
<path d="M1246.600 372.500v11.600M1240.800 378.300h11.600M1244.800 374.400l1.800-2 1.800 2M1244.800 382.200l1.800 2 1.800-2M1242.800 376.500l-2 1.800 2 1.800M1250.400 376.500l2 1.800-2 1.800" fill="none" stroke="#dcdcdc" stroke-width="1.300"/>
<path d="M1265.500 371.500v11h11M1262.500 374.500h11v11" fill="none" stroke="#dcdcdc" stroke-width="1.300"/>
<path d="M1274 371.500h2.500v2.500M1265 385.500h-2.500v-2.500" fill="none" stroke="#dcdcdc" stroke-width="1" stroke-dasharray="1 1"/>
<rect x="1286" y="377.500" width="9.600" height="7.500" rx="0.800" fill="#dcdcdc"/><path d="M1288 377.500v-2.500a2.800 2.800 0 0 1 5.600 0v2.500" fill="none" stroke="#dcdcdc" stroke-width="1.500"/>
</svg>
<div class="abs" style="left:0;top:393px;width:237px;height:246px;background:#535353"></div>
<div class="abs" style="left:229px;top:393px;width:8px;height:246px;background:#505050"></div>
<div class="abs" style="left:0;top:393px;width:237px;height:1px;background:#434343"></div>
<div class="abs" style="left:31px;top:394px;width:198px;height:38px;background:#6b6b6b"></div>
<div class="abs" style="left:0;top:432px;width:229px;height:1px;background:#434343"></div>
<div class="abs" style="left:75px;top:407.5px;font-size:12px;line-height:14px;color:#f0f0f0;white-space:nowrap">图层 1</div>
<svg style="left:8px;top:407px" width="15" height="12" viewBox="0 0 15 12"><path d="M0.500 6C3 1.800 12 1.800 14.500 6 12 10.200 3 10.200 0.500 6z" fill="#dedede"/><circle cx="7.500" cy="5.800" r="2.700" fill="#535353"/><circle cx="6.600" cy="4.900" r="1" fill="#dedede"/></svg>
<div class="abs" style="left:0;top:471px;width:229px;height:1px;background:#434343"></div>
<div class="abs" style="left:75px;top:446.5px;font-size:12px;line-height:14px;color:#f0f0f0;white-space:nowrap">椭圆 4 拷贝</div>
<svg style="left:8px;top:446px" width="15" height="12" viewBox="0 0 15 12"><path d="M0.500 6C3 1.800 12 1.800 14.500 6 12 10.200 3 10.200 0.500 6z" fill="#dedede"/><circle cx="7.500" cy="5.800" r="2.700" fill="#535353"/><circle cx="6.600" cy="4.900" r="1" fill="#dedede"/></svg>
<div class="abs" style="left:0;top:510px;width:229px;height:1px;background:#434343"></div>
<div class="abs" style="left:75px;top:485.5px;font-size:12px;line-height:14px;color:#f0f0f0;white-space:nowrap">椭圆 4</div>
<svg style="left:8px;top:485px" width="15" height="12" viewBox="0 0 15 12"><path d="M0.500 6C3 1.800 12 1.800 14.500 6 12 10.200 3 10.200 0.500 6z" fill="#dedede"/><circle cx="7.500" cy="5.800" r="2.700" fill="#535353"/><circle cx="6.600" cy="4.900" r="1" fill="#dedede"/></svg>
<div class="abs" style="left:0;top:549px;width:229px;height:1px;background:#434343"></div>
<div class="abs" style="left:75px;top:524.5px;font-size:12px;line-height:14px;color:#f0f0f0;white-space:nowrap">椭圆 3 拷贝</div>
<svg style="left:8px;top:524px" width="15" height="12" viewBox="0 0 15 12"><path d="M0.500 6C3 1.800 12 1.800 14.500 6 12 10.200 3 10.200 0.500 6z" fill="#dedede"/><circle cx="7.500" cy="5.800" r="2.700" fill="#535353"/><circle cx="6.600" cy="4.900" r="1" fill="#dedede"/></svg>
<div class="abs" style="left:0;top:588px;width:229px;height:1px;background:#434343"></div>
<div class="abs" style="left:75px;top:563.5px;font-size:12px;line-height:14px;color:#f0f0f0;white-space:nowrap">椭圆 3</div>
<svg style="left:8px;top:563px" width="15" height="12" viewBox="0 0 15 12"><path d="M0.500 6C3 1.800 12 1.800 14.500 6 12 10.200 3 10.200 0.500 6z" fill="#dedede"/><circle cx="7.500" cy="5.800" r="2.700" fill="#535353"/><circle cx="6.600" cy="4.900" r="1" fill="#dedede"/></svg>
<div class="abs" style="left:0;top:627px;width:229px;height:1px;background:#434343"></div>
<div class="abs" style="left:75px;top:602.5px;font-size:12px;line-height:14px;color:#f0f0f0;white-space:nowrap">椭圆 2</div>
<svg style="left:8px;top:602px" width="15" height="12" viewBox="0 0 15 12"><path d="M0.500 6C3 1.800 12 1.800 14.500 6 12 10.200 3 10.200 0.500 6z" fill="#dedede"/><circle cx="7.500" cy="5.800" r="2.700" fill="#535353"/><circle cx="6.600" cy="4.900" r="1" fill="#dedede"/></svg>
<div class="abs" style="left:30px;top:393px;width:1px;height:235px;background:#434343"></div>
<div class="abs" style="left:35px;top:398px;width:30px;height:30px;background:repeating-conic-gradient(#fff 0% 25%,#cdcdcd 0% 50%) 0 0/8px 8px;overflow:hidden"><svg style="left:0;top:0" width="30" height="30" viewBox="-15 -15 30 30"><g transform="rotate(-1.300)"><circle r="12.500" fill="#fff"/><path d="M0-12.500A12.500 12.500 0 0 1 0 12.500A6.250 6.250 0 0 1 0 0A6.250 6.250 0 0 0 0-12.500Z" fill="#000"/><circle cy="-6.250" r="1.400" fill="#000"/><circle cy="6.250" r="1.400" fill="#fff"/></g></svg><svg style="left:18px;top:18px" width="12" height="12" viewBox="0 0 12 12"><rect width="12" height="12" fill="#6b6b6b"/><path d="M3.500 1h5l2.500 2.500v7.500h-7.500z" fill="#dedede"/><rect x="1.500" y="6" width="5" height="5" fill="#dedede" stroke="#6b6b6b" stroke-width="1"/></svg></div>
<div class="abs" style="left:35px;top:436px;width:31px;height:31px;background:repeating-conic-gradient(#fff 0% 25%,#cdcdcd 0% 50%) 0 0/8px 8px;overflow:hidden"><svg style="left:0;top:0" width="30" height="30" viewBox="0 0 30 30"><circle cx="21" cy="14.500" r="1.600" fill="#000"/></svg><svg style="left:19px;top:19px" width="12" height="12" viewBox="0 0 12 12"><rect width="12" height="12" fill="#535353"/><rect x="2.500" y="2.500" width="7.500" height="7.500" rx="1.500" fill="none" stroke="#e4e4e4" stroke-width="1"/><g fill="#535353" stroke="#e4e4e4" stroke-width="0.800"><rect x="1.300" y="1.300" width="2.400" height="2.400"/><rect x="8.800" y="1.300" width="2.400" height="2.400"/><rect x="1.300" y="8.800" width="2.400" height="2.400"/><rect x="8.800" y="8.800" width="2.400" height="2.400"/></g></svg></div>
<div class="abs" style="left:35px;top:475px;width:31px;height:31px;background:repeating-conic-gradient(#fff 0% 25%,#cdcdcd 0% 50%) 0 0/8px 8px;overflow:hidden"><svg style="left:19px;top:19px" width="12" height="12" viewBox="0 0 12 12"><rect width="12" height="12" fill="#535353"/><rect x="2.500" y="2.500" width="7.500" height="7.500" rx="1.500" fill="none" stroke="#e4e4e4" stroke-width="1"/><g fill="#535353" stroke="#e4e4e4" stroke-width="0.800"><rect x="1.300" y="1.300" width="2.400" height="2.400"/><rect x="8.800" y="1.300" width="2.400" height="2.400"/><rect x="1.300" y="8.800" width="2.400" height="2.400"/><rect x="8.800" y="8.800" width="2.400" height="2.400"/></g></svg></div>
<div class="abs" style="left:35px;top:514px;width:31px;height:31px;background:repeating-conic-gradient(#fff 0% 25%,#cdcdcd 0% 50%) 0 0/8px 8px;overflow:hidden"><svg style="left:0;top:0" width="30" height="30" viewBox="0 0 30 30"><circle cx="21" cy="12" r="7" fill="#fff"/></svg><svg style="left:19px;top:19px" width="12" height="12" viewBox="0 0 12 12"><rect width="12" height="12" fill="#535353"/><rect x="2.500" y="2.500" width="7.500" height="7.500" rx="1.500" fill="none" stroke="#e4e4e4" stroke-width="1"/><g fill="#535353" stroke="#e4e4e4" stroke-width="0.800"><rect x="1.300" y="1.300" width="2.400" height="2.400"/><rect x="8.800" y="1.300" width="2.400" height="2.400"/><rect x="1.300" y="8.800" width="2.400" height="2.400"/><rect x="8.800" y="8.800" width="2.400" height="2.400"/></g></svg></div>
<div class="abs" style="left:35px;top:553px;width:31px;height:31px;background:repeating-conic-gradient(#fff 0% 25%,#cdcdcd 0% 50%) 0 0/8px 8px;overflow:hidden"><svg style="left:0;top:0" width="30" height="30" viewBox="0 0 30 30"><circle cx="9" cy="14.500" r="6.300" fill="#000"/></svg><svg style="left:19px;top:19px" width="12" height="12" viewBox="0 0 12 12"><rect width="12" height="12" fill="#535353"/><rect x="2.500" y="2.500" width="7.500" height="7.500" rx="1.500" fill="none" stroke="#e4e4e4" stroke-width="1"/><g fill="#535353" stroke="#e4e4e4" stroke-width="0.800"><rect x="1.300" y="1.300" width="2.400" height="2.400"/><rect x="8.800" y="1.300" width="2.400" height="2.400"/><rect x="1.300" y="8.800" width="2.400" height="2.400"/><rect x="8.800" y="8.800" width="2.400" height="2.400"/></g></svg></div>
<div class="abs" style="left:35px;top:592px;width:31px;height:31px;background:repeating-conic-gradient(#fff 0% 25%,#cdcdcd 0% 50%) 0 0/8px 8px;overflow:hidden"><svg style="left:0;top:0" width="30" height="30" viewBox="0 0 30 30"><circle cx="15" cy="15.500" r="12.600" fill="#fff"/><path d="M2.400 15.500a12.600 12.600 0 0 0 25.200 0z" fill="#000"/></svg></div>
<div class="abs" style="left:34px;top:397px;width:32px;height:32px;border:1px solid #242424"></div>
<svg style="left:32px;top:395px" width="36" height="36" viewBox="0 0 36 36"><path d="M0.750 7V0.750H7M29 0.750h6.250V7M35.250 29v6.250H29M7 35.250H0.750V29" fill="none" stroke="#f2f2f2" stroke-width="1.500"/></svg>
</div>
</body>
</html>
